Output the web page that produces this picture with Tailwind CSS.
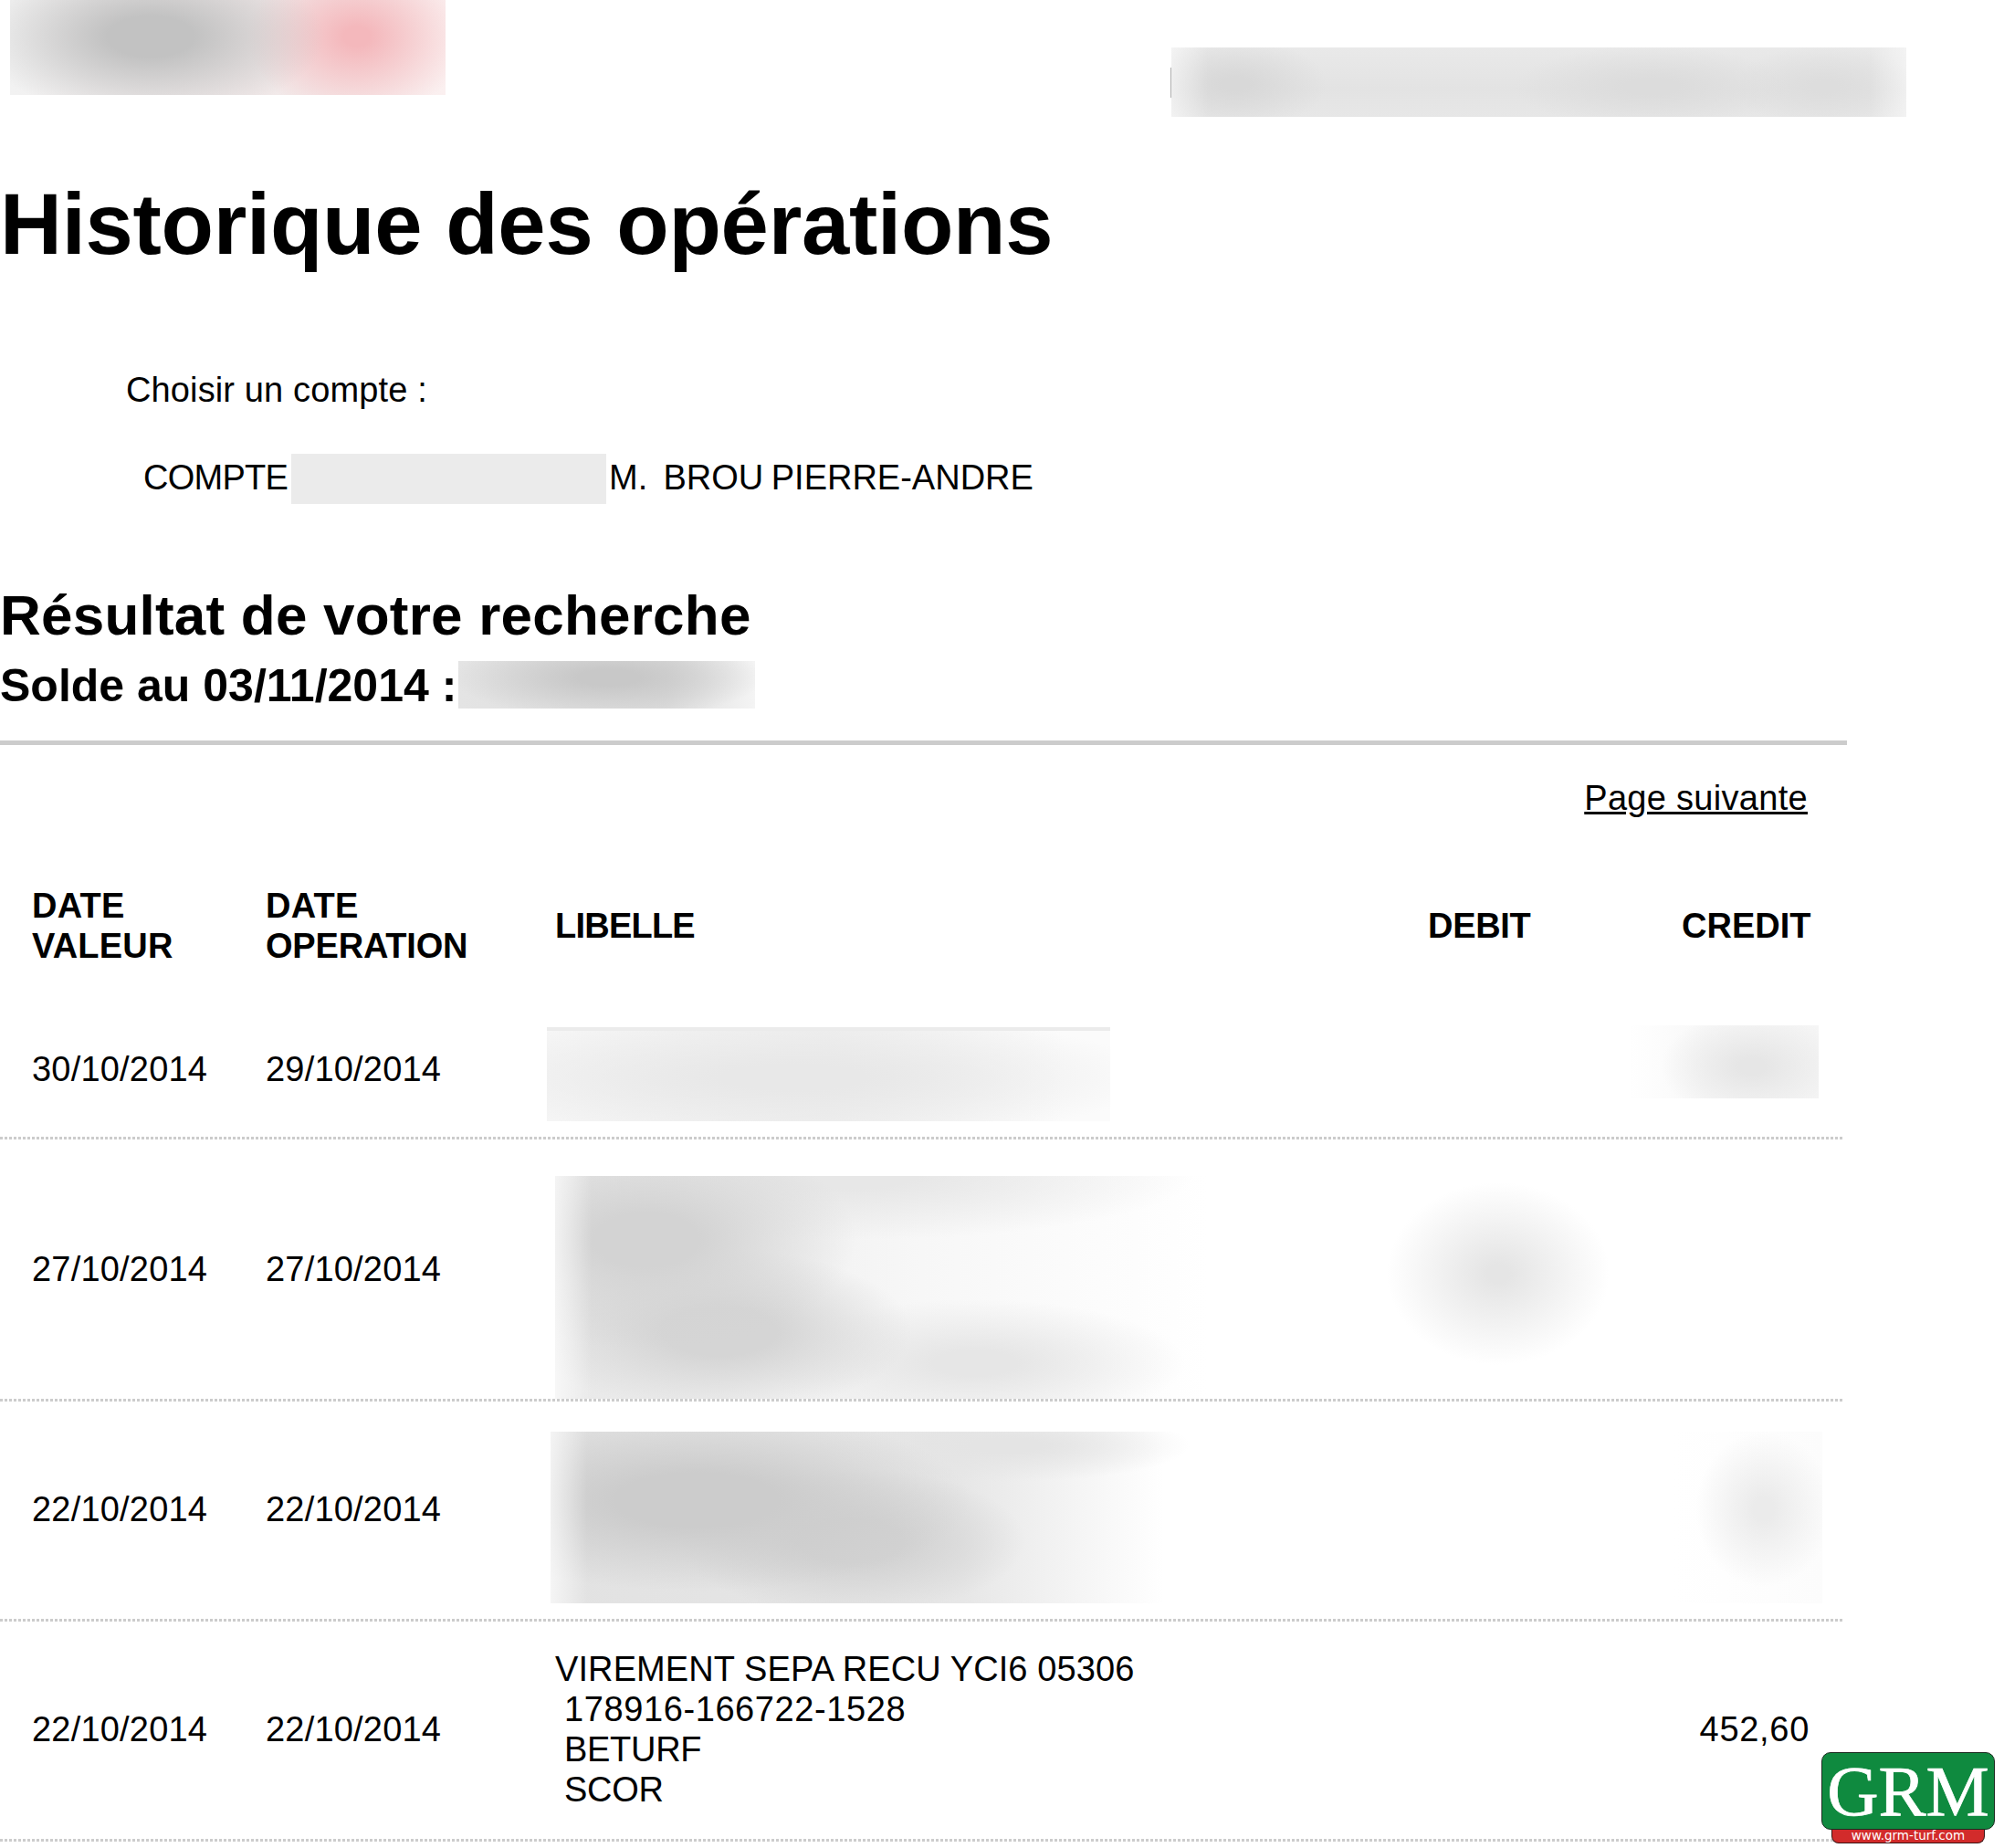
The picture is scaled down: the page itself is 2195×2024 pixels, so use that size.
<!DOCTYPE html>
<html lang="fr">
<head>
  <meta charset="UTF-8" />
  <title>Historique des opérations</title>
  <script src="https://cdn.jsdelivr.net/npm/@tailwindcss/browser@4"></script>
</head>
<body class="bg-white text-black font-['Liberation_Sans',Arial,sans-serif]">
  <div class="relative w-[2195px] h-[2024px] overflow-hidden">

    <!-- header, masked logo and masked address -->
    <header class="flex justify-between h-[199px]">
      <div class="ml-[11px] w-[477px] h-[104px] bg-[radial-gradient(ellipse_190px_90px_at_154px_40px,#c2c2c2_25%,transparent),radial-gradient(ellipse_120px_90px_at_380px_40px,#f4b8bc_12%,transparent),linear-gradient(90deg,#f2f2f2,#f0e8e8_55%,#fbf0f0)]"></div>
      <div class="mt-[52px] mr-[107px] flex items-center self-start">
        <div class="w-px h-[33px] bg-[#b0b0b0]"></div>
        <div class="w-[805px] h-[76px] bg-[linear-gradient(90deg,#ffffff77,#ffffff00_40px,#ffffff00_765px,#ffffff77),radial-gradient(ellipse_100px_50px_at_70px_40px,#d8d8d8_15%,transparent),radial-gradient(ellipse_150px_45px_at_526px_43px,#dcdcdc_20%,transparent),radial-gradient(ellipse_100px_45px_at_716px_43px,#dddddd_15%,transparent),linear-gradient(180deg,#e9e9e9,#e3e3e3_60%,#e7e7e7)]"></div>
      </div>
    </header>

    <h1 class="text-[94px] leading-[94px] font-bold tracking-[-0.25px]">Historique des opérations</h1>

    <p class="mt-[112px] pl-[138px] text-[38px] leading-[44px] tracking-[0.13px]">Choisir un compte :</p>

    <div class="mt-[48px] pl-[157px] flex items-start h-[55px] text-[38px] leading-[44px]">
      <span class="mt-[4px] tracking-[-0.75px]">COMPTE</span>
      <span class="ml-[4px] w-[345px] h-[55px] bg-[#ebebeb]"></span>
      <span class="ml-[3px] mt-[4px] whitespace-pre [word-spacing:-2px]">M.  BROU PIERRE-ANDRE</span>
    </div>

    <h2 class="mt-[92px] text-[62px] leading-[60px] font-bold tracking-[0.22px]">Résultat de votre recherche</h2>

    <div class="mt-[20px] flex items-start h-[52px] text-[50px] leading-[48px] font-bold">
      <span class="mt-[3px]">Solde au 03/11/2014 :</span>
      <span class="ml-[2px] w-[325px] h-[52px] bg-[radial-gradient(ellipse_170px_45px_at_165px_18px,#c8c8c8_20%,transparent),linear-gradient(90deg,#e4e4e4,#dddddd_70%,#f4f4f4)]"></span>
    </div>

    <div class="mt-[35px] w-[2023px] h-[5px] bg-[#cccccc]"></div>

    <div class="mt-[36px] w-[1980px] text-right text-[38px] leading-[44px] underline tracking-[0.3px]">Page suivante</div>

    <table class="mt-[35px] w-[2023px] table-fixed border-collapse text-[38px] leading-[44px]">
      <colgroup>
        <col class="w-[35px]" />
        <col class="w-[256px]" />
        <col class="w-[317px]" />
        <col class="w-[956px]" />
        <col class="w-[278px]" />
        <col class="w-[181px]" />
      </colgroup>
      <thead>
        <tr class="h-[164px] font-bold text-left">
          <th></th>
          <th class="font-bold pt-[2px] tracking-[0.2px]">DATE<br />VALEUR</th>
          <th class="font-bold pt-[2px]"><span class="tracking-[0.2px]">DATE</span><br /><span class="tracking-[-0.2px]">OPERATION</span></th>
          <th class="font-bold pt-[2px] tracking-[-0.77px]">LIBELLE</th>
          <th class="font-bold pt-[2px] tracking-[-0.3px]">DEBIT</th>
          <th class="font-bold pt-[2px] text-right pr-[40px]">CREDIT</th>
        </tr>
      </thead>
      <tbody class="tracking-[0.2px]">
        <tr class="h-[153px] [&>td]:pb-[2px] bg-[repeating-linear-gradient(90deg,#cccccc_0_3px,transparent_3px_5px)] bg-[length:2019px_3px] bg-bottom-left bg-no-repeat">
          <td></td>
          <td>30/10/2014</td>
          <td>29/10/2014</td>
          <td class="align-top">
            <div class="mt-[30px] -ml-[9px] w-[617px] h-[103px] bg-[linear-gradient(180deg,#ebebeb_4px,transparent_4px),radial-gradient(ellipse_400px_70px_at_270px_55px,#e8e8e8_20%,transparent),linear-gradient(90deg,#f6f6f6,#efefef_50%,#fbfbfb_92%)]"></div>
          </td>
          <td></td>
          <td class="align-top">
            <div class="mt-[28px] -ml-[58px] w-[208px] h-[80px] bg-[radial-gradient(ellipse_100px_60px_at_135px_45px,#e6e6e6_15%,transparent),linear-gradient(90deg,#ffffff,#f8f8f8_40%,#f5f5f5)]"></div>
          </td>
        </tr>
        <tr class="h-[287px] [&>td]:pb-[3px] bg-[repeating-linear-gradient(90deg,#cccccc_0_3px,transparent_3px_5px)] bg-[length:2019px_3px] bg-bottom-left bg-no-repeat">
          <td></td>
          <td>27/10/2014</td>
          <td>27/10/2014</td>
          <td class="align-top">
            <div class="mt-[40px] w-[730px] h-[244px] bg-[linear-gradient(90deg,#ffffffaa,#ffffff00_40px),radial-gradient(ellipse_230px_120px_at_100px_70px,#d3d3d3_25%,transparent),radial-gradient(ellipse_210px_90px_at_180px_170px,#d5d5d5_30%,transparent),radial-gradient(ellipse_230px_70px_at_460px_205px,#e6e6e6_20%,transparent),radial-gradient(ellipse_380px_70px_at_320px_0px,#e7e7e7_20%,transparent),linear-gradient(90deg,#e8e8e8,#f7f7f7_55%,#ffffff_98%)]"></div>
          </td>
          <td class="align-top">
            <div class="mt-[47px] -ml-[45px] w-[244px] h-[200px] bg-[radial-gradient(ellipse_122px_100px_at_center,#e5e5e5_10%,transparent)]"></div>
          </td>
          <td></td>
        </tr>
        <tr class="h-[241px] [&>td]:pb-[5px] bg-[repeating-linear-gradient(90deg,#cccccc_0_3px,transparent_3px_5px)] bg-[length:2019px_3px] bg-bottom-left bg-no-repeat">
          <td></td>
          <td>22/10/2014</td>
          <td>22/10/2014</td>
          <td class="align-top">
            <div class="mt-[33px] -ml-[5px] w-[730px] h-[188px] bg-[linear-gradient(90deg,#ffffffaa,#ffffff00_40px),radial-gradient(ellipse_300px_100px_at_160px_75px,#cccccc_30%,transparent),radial-gradient(ellipse_190px_80px_at_330px_120px,#d2d2d2_30%,transparent),radial-gradient(ellipse_200px_40px_at_500px_15px,#e4e4e4_20%,transparent),linear-gradient(90deg,#e2e2e2,#e7e7e7_62%,#ffffff_92%)]"></div>
          </td>
          <td></td>
          <td class="align-top">
            <div class="mt-[33px] -ml-[8px] w-[162px] h-[188px] bg-[radial-gradient(ellipse_75px_85px_at_98px_85px,#ebebeb_15%,transparent),linear-gradient(90deg,#ffffff,#fcfcfc)]"></div>
          </td>
        </tr>
        <tr class="h-[241px] [&>td]:pb-[5px] bg-[repeating-linear-gradient(90deg,#cccccc_0_3px,transparent_3px_5px)] bg-[length:2019px_3px] bg-bottom-left bg-no-repeat">
          <td></td>
          <td>22/10/2014</td>
          <td>22/10/2014</td>
          <td class="tracking-normal">
            <div class="tracking-[0.1px]">VIREMENT SEPA RECU YCI6 05306</div>
            <div class="pl-[10px] tracking-[0.6px]">178916-166722-1528</div>
            <div class="pl-[10px] tracking-[-0.3px]">BETURF</div>
            <div class="pl-[10px] tracking-[-0.3px]">SCOR</div>
          </td>
          <td></td>
          <td class="text-right pr-[41px] tracking-[0.7px]">452,60</td>
        </tr>
      </tbody>
    </table>

    <!-- watermark -->
    <div class="absolute left-[1995px] top-[1919px] w-[190px]">
      <div class="h-[85px] rounded-[10px] border border-[#1c2a20] bg-[#0f8a3f] text-white text-center font-['Liberation_Serif',serif] text-[78px] leading-[84px] [-webkit-text-stroke:0.7px_white]">GRM</div>
      <div class="mx-[11px] h-[15px] rounded-b-[8px] border border-t-0 border-[#3a1414] bg-[#d22b2b] text-white text-center font-['DejaVu_Sans',sans-serif] text-[13.5px] leading-[13px]">www.grm-turf.com</div>
    </div>
  </div>
</body>
</html>
